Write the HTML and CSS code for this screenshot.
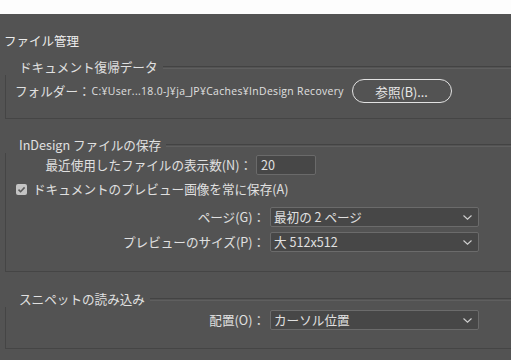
FILE: index.html
```
<!DOCTYPE html>
<html lang="ja">
<head>
<meta charset="utf-8">
<link rel="stylesheet" href="styles.css">
</head>
<body>
<div class="topbar"></div>
<div class="title">ファイル管理</div>

<div class="group g1">
  <div class="legend"><span class="legend-text">ドキュメント復帰データ</span><span class="legend-line"></span></div>
  <div class="box box1">
    <div class="row folder-row">
      <span class="label">フォルダー：</span>
      <span class="path">C:¥User...18.0-J¥ja_JP¥Caches¥InDesign Recovery</span>
      <button class="pill">参照(B)...</button>
    </div>
  </div>
</div>

<div class="group g2">
  <div class="legend"><span class="legend-text">InDesign ファイルの保存</span><span class="legend-line"></span></div>
  <div class="box box2">
    <div class="row num-row">
      <span class="label rlabel-n">最近使用したファイルの表示数(N)：</span>
      <span class="textfield">20</span>
    </div>
    <div class="row check-row">
      <span class="checkbox"><svg width="11" height="11" viewBox="0 0 11 11"><path d="M2.5 5.6 L4.6 7.7 L8.6 3.4" fill="none" stroke="#5a5a5a" stroke-width="1.6"/></svg></span>
      <span class="label">ドキュメントのプレビュー画像を常に保存(A)</span>
    </div>
    <div class="row sel-row page-row">
      <span class="label rlabel">ページ(G)：</span>
      <span class="select"><span>最初の 2 ページ</span><svg class="chev" width="9" height="5" viewBox="0 0 9 5"><path d="M0.5 0.5 L4.5 4.2 L8.5 0.5" fill="none" stroke="#d0d0d0" stroke-width="1.1"/></svg></span>
    </div>
    <div class="row sel-row size-row">
      <span class="label rlabel">プレビューのサイズ(P)：</span>
      <span class="select"><span>大 512x512</span><svg class="chev" width="9" height="5" viewBox="0 0 9 5"><path d="M0.5 0.5 L4.5 4.2 L8.5 0.5" fill="none" stroke="#d0d0d0" stroke-width="1.1"/></svg></span>
    </div>
  </div>
</div>

<div class="group g3">
  <div class="legend"><span class="legend-text">スニペットの読み込み</span><span class="legend-line"></span></div>
  <div class="box box3">
    <div class="row sel-row place-row">
      <span class="label rlabel">配置(O)：</span>
      <span class="select"><span>カーソル位置</span><svg class="chev" width="9" height="5" viewBox="0 0 9 5"><path d="M0.5 0.5 L4.5 4.2 L8.5 0.5" fill="none" stroke="#d0d0d0" stroke-width="1.1"/></svg></span>
    </div>
  </div>
</div>
</body>
</html>
```

FILE: styles.css
```
html, body {
  margin: 0;
  padding: 0;
}
body {
  width: 511px;
  height: 360px;
  overflow: hidden;
  background: #535353;
  color: #e0e0e0;
  font-family: "Noto Sans CJK JP", "Noto Sans", sans-serif;
  font-size: 12.6px;
}
.topbar {
  height: 14px;
  background: #fdfdfd;
}
.title {
  padding: 17px 0 0 4px;
  height: 20px;
  line-height: 20px;
  font-size: 12.5px;
  color: #ececec;
}
.group {
  display: flex;
  flex-direction: column;
}
.g1 { margin-top: 8px; }
.g2 { margin-top: 18px; }
.g3 { margin-top: 19px; }
.legend {
  display: flex;
  align-items: center;
  height: 16px;
  padding-left: 19px;
}
.legend-text {
  line-height: 16px;
  white-space: nowrap;
  padding-right: 5px;
}
.legend-line {
  flex: 1;
  height: 1px;
  border-top: 1px solid #434343;
  border-bottom: 1px solid #5f5f5f;
}
.box {
  margin-left: 5px;
  border-left: 1px solid #454545;
  border-bottom: 1px solid #454545;
  display: flex;
  flex-direction: column;
}
.box1 { padding: 4px 0 15px 0; }
.box2 { padding: 2px 0 19px 0; }
.box3 { padding: 3px 0 18px 0; }
.row {
  display: flex;
  align-items: center;
}
.label {
  white-space: nowrap;
  line-height: 16px;
}
.folder-row {
  height: 24px;
  padding-left: 9px;
}
.path {
  font-family: "Open Sans", "Noto Sans", sans-serif;
  font-size: 10.4px;
  letter-spacing: 0.35px;
  margin-left: 1px;
  white-space: nowrap;
  width: 254px;
}
.pill {
  margin-left: 6px;
  width: 100px;
  height: 24px;
  border: 1px solid #e2e2e2;
  border-radius: 12px;
  background: transparent;
  color: #e8e8e8;
  font-family: "Noto Sans CJK JP", "Noto Sans", sans-serif;
  font-size: 12.6px;
  padding: 0;
}
.num-row {
  height: 20px;
}
.rlabel-n {
  width: 246px;
  text-align: right;
}
.textfield {
  margin-left: 4px;
  width: 54px;
  height: 18px;
  line-height: 18px;
  border: 1px solid #6a6a6a;
  background: #474747;
  border-radius: 2px;
  padding-left: 4px;
}
.check-row {
  height: 20px;
  margin-top: 4px;
  padding-left: 10px;
}
.checkbox {
  width: 11px;
  height: 11px;
  background: #c4c4c4;
  border-radius: 2px;
  margin-right: 6px;
  display: flex;
}
.sel-row {
  height: 20px;
}
.page-row { margin-top: 8px; }
.size-row { margin-top: 5px; }
.rlabel {
  width: 259px;
  text-align: right;
}
.select {
  margin-left: 5px;
  width: 209px;
  height: 20px;
  border: 1px solid #6b6b6b;
  border-radius: 2px;
  background: #474747;
  display: flex;
  align-items: center;
  justify-content: space-between;
  padding: 0 6px 0 3px;
  box-sizing: border-box;
  line-height: 16px;
}
.chev {
  display: block;
}
```
